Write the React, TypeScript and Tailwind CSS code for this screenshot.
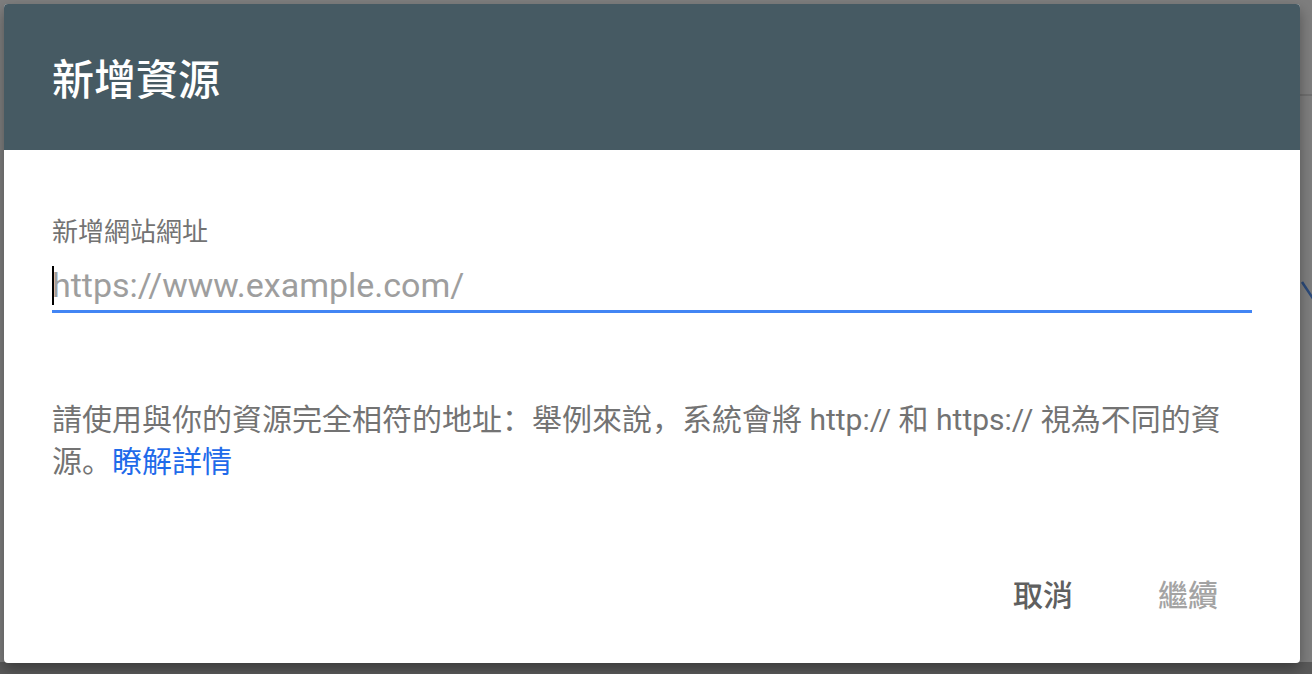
const font = "font-['Roboto','Noto_Sans_CJK_TC',sans-serif]";

function Backdrop() {
  return (
    <div className="flex h-full w-full flex-col bg-[#7e7e7e]">
      <div className="flex justify-end pt-[94px]">
        <div className="h-[2px] w-[20px] bg-[#6f6f6f]" />
      </div>
      <div className="flex flex-1 justify-end pt-[180px]">
        <svg width="16" height="30" viewBox="0 0 16 30" className="mr-[-4px]">
          <path d="M2 6 L14 24" stroke="#2b4a7a" strokeWidth="2.5" fill="none" />
        </svg>
      </div>
      <div className="h-[12px] w-full bg-[#5a5a5a]" />
    </div>
  );
}

function AddPropertyDialog() {
  return (
    <div
      className={`absolute left-[4px] top-[4px] flex h-[659px] w-[1296px] flex-col rounded-[4px] bg-white shadow-[0_6px_14px_rgba(0,0,0,0.35)] ${font}`}
    >
      <div className="flex h-[146px] items-center rounded-t-[4px] bg-[#465a63] pl-[48px] pt-[8px]">
        <h1 className="text-[42px] font-medium leading-[42px] text-white">新增資源</h1>
      </div>

      <div className="flex flex-col px-[48px]">
        <label className="mt-[68px] text-[26px] leading-[28px] text-[#737373]">新增網站網址</label>

        <div className="relative mt-[19px] border-b-[3px] border-[#4285f4] pb-[5px]">
          <span className="absolute left-0 top-[1px] h-[39px] w-[2px] bg-black" />
          <div className="text-[34px] leading-[40px] text-[#9e9e9e]">https://www.example.com/</div>
        </div>

        {/* SC face puts the full-width punctuation bottom-left, as in the shot */}
        <p className="mt-[86px] w-[1190px] font-['Roboto','Noto_Sans_CJK_SC',sans-serif] text-[30px] leading-[42px] text-[#737373]">
          請使用與你的資源完全相符的地址：舉例來說，系統會將 http:// 和 https:// 視為不同的資源。
          <a className="text-[#1f6bea]">瞭解詳情</a>
        </p>
      </div>

      <div className="mt-auto flex justify-end gap-[53px] pb-[52px] pr-[66px]">
        <button className="px-[16px] text-[30px] font-medium leading-[30px] text-[#5f5f5f]">取消</button>
        <button className="px-[16px] text-[30px] font-medium leading-[30px] text-[#a3a3a3]">繼續</button>
      </div>
    </div>
  );
}

export default function App() {
  return (
    <div className="relative h-[674px] w-[1312px] overflow-hidden">
      <Backdrop />
      <AddPropertyDialog />
    </div>
  );
}
